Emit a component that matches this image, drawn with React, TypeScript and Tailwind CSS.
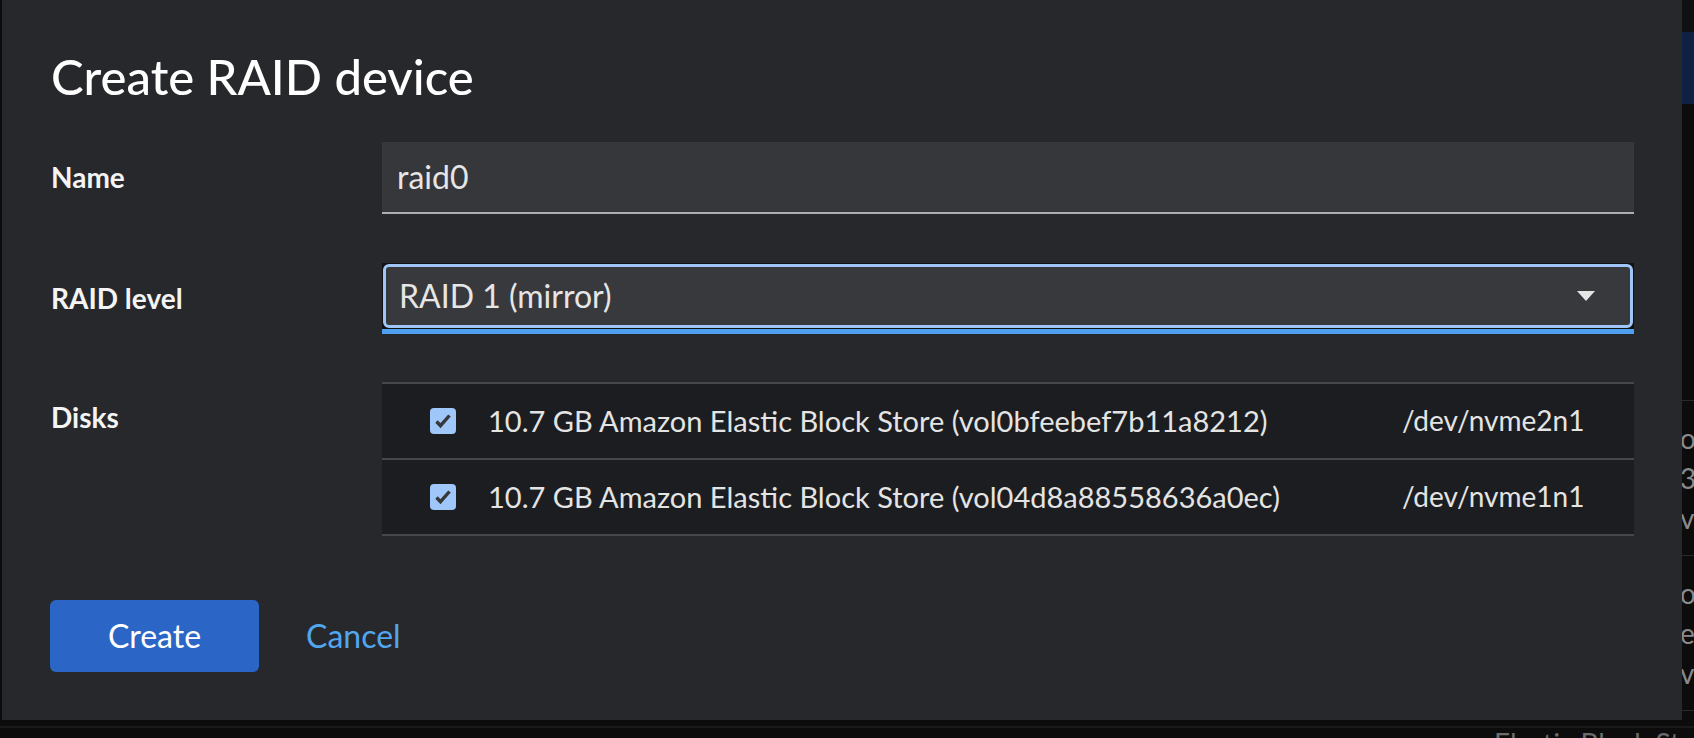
const disks = [
  { name: "10.7 GB Amazon Elastic Block Store (vol0bfeebef7b11a8212)", dev: "/dev/nvme2n1" },
  { name: "10.7 GB Amazon Elastic Block Store (vol04d8a88558636a0ec)", dev: "/dev/nvme1n1" },
];

const bgRows = [
  ["oc", "3", "vi"],
  ["oc", "e", "vi"],
];

function CheckBox() {
  return (
    <span className="flex h-[26px] w-[26px] shrink-0 items-center justify-center rounded-[4px] bg-[#a0c7f9]">
      <svg width="26" height="26" viewBox="0 0 26 26">
        <path d="M6.5 13.5l4 4.2L19.5 7.5" fill="none" stroke="#37383c" strokeWidth="3.4" />
      </svg>
    </span>
  );
}

function Backdrop() {
  return (
    <div className="flex h-full flex-col text-[28px] whitespace-nowrap">
      <div className="flex h-[726px] shrink-0">
        <div className="flex-1" />
        <div className="flex w-[15px] shrink-0 flex-col overflow-hidden text-[#8a8a8c]">
          <div className="h-[32px] shrink-0 bg-[#0f1012]" />
          <div className="h-[72px] shrink-0 bg-[#0f2142]" />
          <div className="h-[296px] shrink-0" />
          {bgRows.map((lines, i) => (
            <div key={i} className="h-[155px] shrink-0 border-t border-[#2a2a2c] pl-[1px] pt-[17px] leading-[40px]">
              {lines.map((l, j) => (
                <div key={j}>{l}</div>
              ))}
            </div>
          ))}
          <div className="flex-1 border-t border-[#2a2a2c]" />
        </div>
      </div>
      <div className="border-t-2 border-[#1a1a1b] pl-[1494px] pt-px leading-none text-[#6c6c6e]">Elastic Block Store</div>
    </div>
  );
}

export default function App() {
  return (
    <div className="relative h-[738px] w-full overflow-hidden bg-[#0c0c0d] font-[family-name:Lato,sans-serif] leading-[1.2]">
      <Backdrop />

      <div className="absolute left-[2px] top-0 h-[720px] w-[1680px] bg-[#27282c] pl-[49px] pr-[48px] pt-[52px]">
        <h1 className="text-[49px] leading-[49px] font-medium text-white">Create RAID device</h1>

        <div className="mt-[41px] grid grid-cols-[331px_1fr] items-center">
          <label className="text-[28px] font-bold text-[#f4f4f4]">Name</label>
          <div className="flex h-[72px] items-center border-b-2 border-[#adaeb1] bg-[#36373b] px-[15px] text-[32px] text-[#e6e6e6]">
            raid0
          </div>
        </div>

        <div className="mt-[49px] grid grid-cols-[331px_1fr] items-center">
          <label className="text-[28px] font-bold text-[#f4f4f4]">RAID level</label>
          <div className="flex flex-col">
            <div className="h-[66px] bg-[#111214] p-px">
              <div className="flex h-full items-center justify-between rounded-[6px] border-[3px] border-[#a0c6f8] bg-[#38393d] pl-[13px] pr-[35px] text-[32px] text-[#e6e6e6]">
                <span>RAID 1 (mirror)</span>
                <svg width="18" height="10" viewBox="0 0 18 10">
                  <path d="M0 0h18L9 10z" fill="#e6e6e6" />
                </svg>
              </div>
            </div>
            <div className="h-[5px] bg-[#4fa0ef]" />
          </div>
        </div>

        <div className="mt-[48px] grid grid-cols-[331px_1fr] items-start">
          <label className="pt-[19px] text-[28px] font-bold text-[#f4f4f4]">Disks</label>
          <div className="border-b-2 border-[#46474b] bg-[#1c1d20]">
            {disks.map((d) => (
              <div key={d.dev} className="flex h-[76px] items-center border-t-2 border-[#46474b] pl-[48px] text-[28px] text-[#e4e4e4]">
                <CheckBox />
                <span className="ml-[32px] flex-1 text-[29px]">{d.name}</span>
                <span className="w-[232px] shrink-0">{d.dev}</span>
              </div>
            ))}
          </div>
        </div>

        <div className="mt-[64px] flex items-center gap-[47px]">
          <button className="-ml-px h-[72px] w-[209px] rounded-[6px] bg-[#2b66c7] text-[32px] text-white">Create</button>
          <button className="text-[32px] text-[#52a6ee]">Cancel</button>
        </div>
      </div>
    </div>
  );
}
